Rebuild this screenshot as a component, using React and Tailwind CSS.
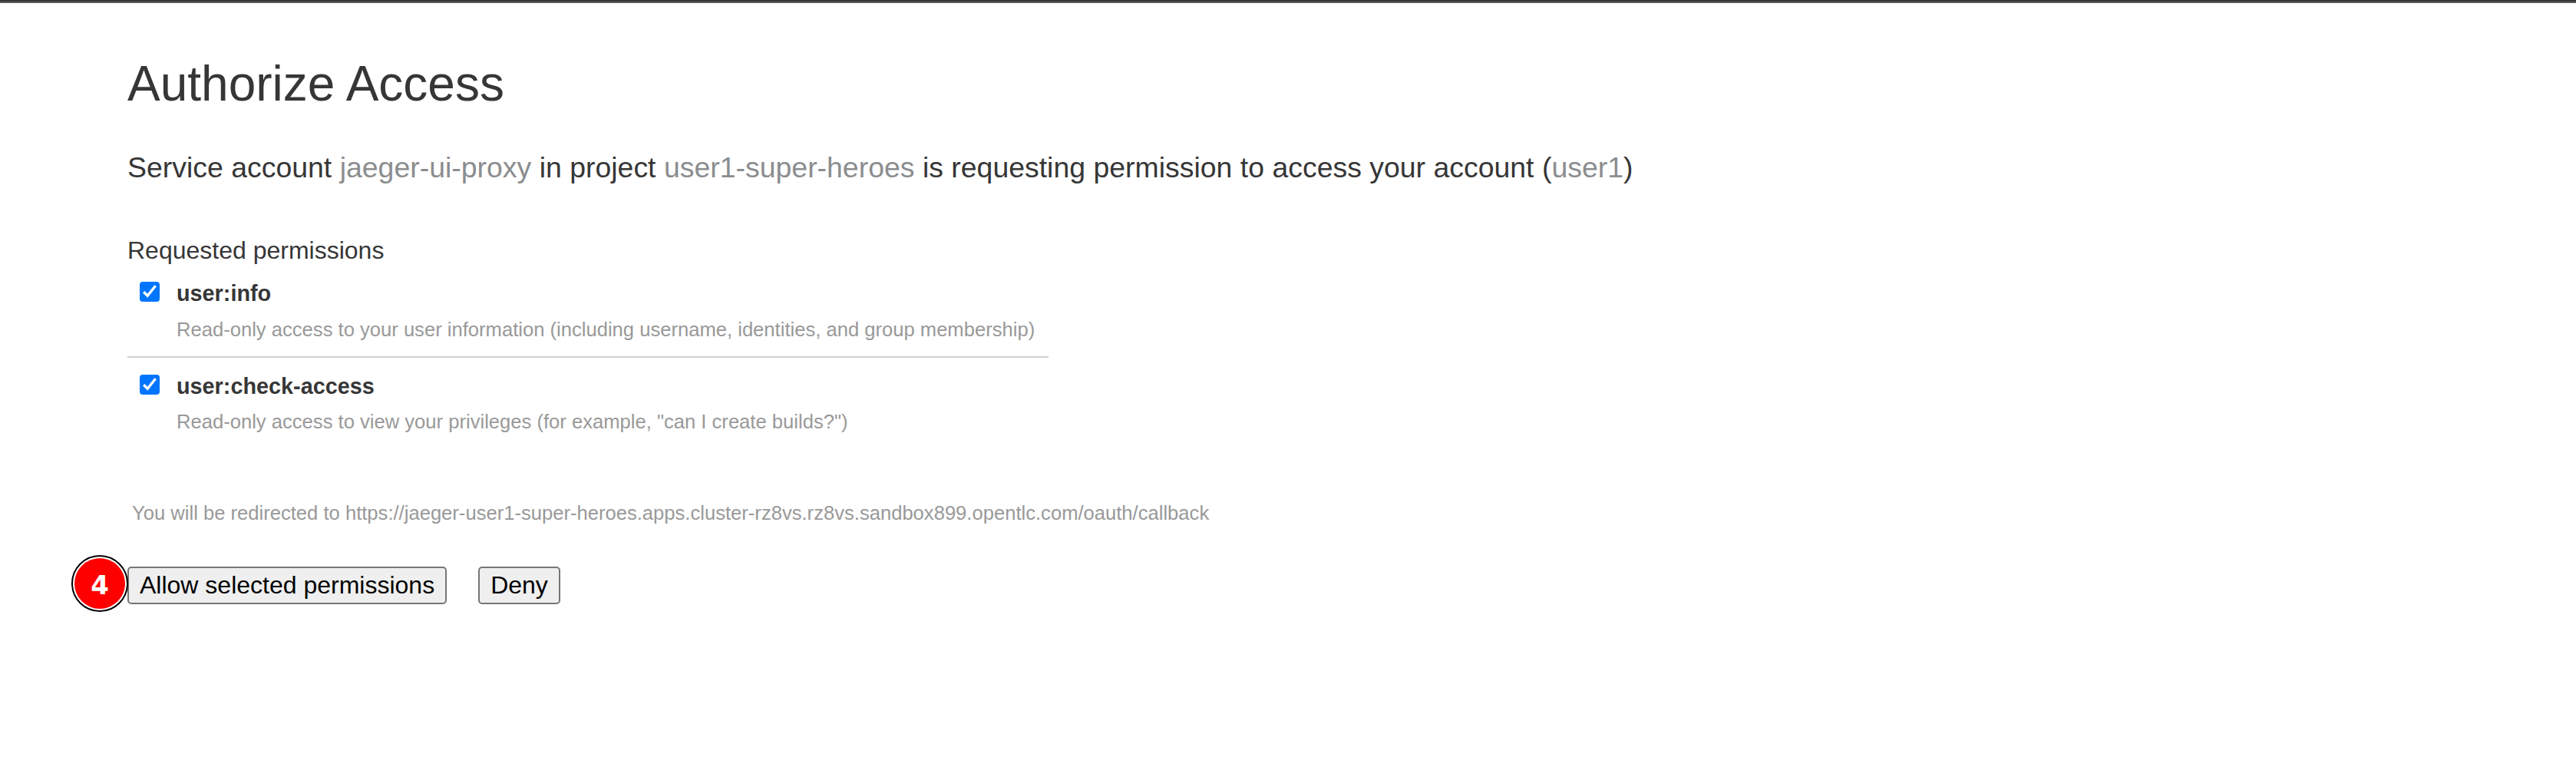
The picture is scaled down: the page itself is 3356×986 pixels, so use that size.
function CheckedBox() {
  return (
    <span role="checkbox" aria-checked="true" className="flex size-[26px] shrink-0 rounded-[4px] bg-[#0075ff]">
      <svg viewBox="0 0 26 26" className="size-full" fill="none" stroke="#ffffff" strokeWidth="3.4">
        <path d="M5.2 13.2L10.2 18.3L20.6 5.2" />
      </svg>
    </span>
  );
}

function Scope({ name, description, className, descriptionClassName }) {
  return (
    <li className={`flex pl-4 ${className}`}>
      <CheckedBox />
      <div className="ml-[22px]">
        <div className="mt-[-5px] text-[28.8px] leading-[40px] font-bold">{name}</div>
        <div className={`text-[25.6px] leading-[36px] whitespace-nowrap text-[#999999] ${descriptionClassName}`}>
          {description}
        </div>
      </div>
    </li>
  );
}

function Button({ children }) {
  return (
    <button className="h-[49px] rounded-[5px] border-2 border-[#767676] bg-[#efefef] px-[14px] text-[32px] leading-[43px] whitespace-nowrap text-black">
      {children}
    </button>
  );
}

export default function App() {
  return (
    <div className="min-h-screen overflow-hidden bg-white font-['Liberation_Sans',Arial,sans-serif] text-[#363636]">
      <div className="h-1 border-b-2 border-[#58585b] bg-[#36363a]" />
      <main className="flex flex-col items-start pl-[166px]">
        <h1 className="mt-[69px] text-[64px] leading-[72px]">Authorize Access</h1>
        <h3 className="mt-[50px] text-[37.44px] leading-[46px] whitespace-nowrap">
          Service account <span className="text-[#8b8d8f]">jaeger-ui-proxy</span> in project{" "}
          <span className="text-[#8b8d8f]">user1-super-heroes</span> is requesting permission to access your account (
          <span className="text-[#8b8d8f]">user1</span>)
        </h3>
        <div className="mt-[67px] text-[32px] leading-[36px]">Requested permissions</div>
        <ul className="mt-[23px] w-[1200px]">
          <Scope
            name="user:info"
            description="Read-only access to your user information (including username, identities, and group membership)"
            className="h-[99px] border-b-2 border-[#d1d1d1]"
            descriptionClassName="mt-[9px]"
          />
          <Scope
            name="user:check-access"
            description={'Read-only access to view your privileges (for example, "can I create builds?")'}
            className="h-[102px] pt-[22px]"
            descriptionClassName="mt-2"
          />
        </ul>
        <div className="mt-[82px] ml-[6px] text-[25.6px] leading-[36px] whitespace-nowrap text-[#999999]">
          You will be redirected to https://jaeger-user1-super-heroes.apps.cluster-rz8vs.rz8vs.sandbox899.opentlc.com/oauth/callback
        </div>
        <div className="relative mt-[52px] flex gap-[41px]">
          <Button>Allow selected permissions</Button>
          <Button>Deny</Button>
          <span className="absolute top-[-15px] left-[-73px] flex size-[74px] items-center justify-center rounded-full border-2 border-black bg-white p-[2px]">
            <span className="flex size-full items-center justify-center rounded-full bg-[#ff0000] pt-[3px] font-['DejaVu_Sans',sans-serif] text-[34px] leading-none font-bold text-white">
              4
            </span>
          </span>
        </div>
      </main>
    </div>
  );
}
